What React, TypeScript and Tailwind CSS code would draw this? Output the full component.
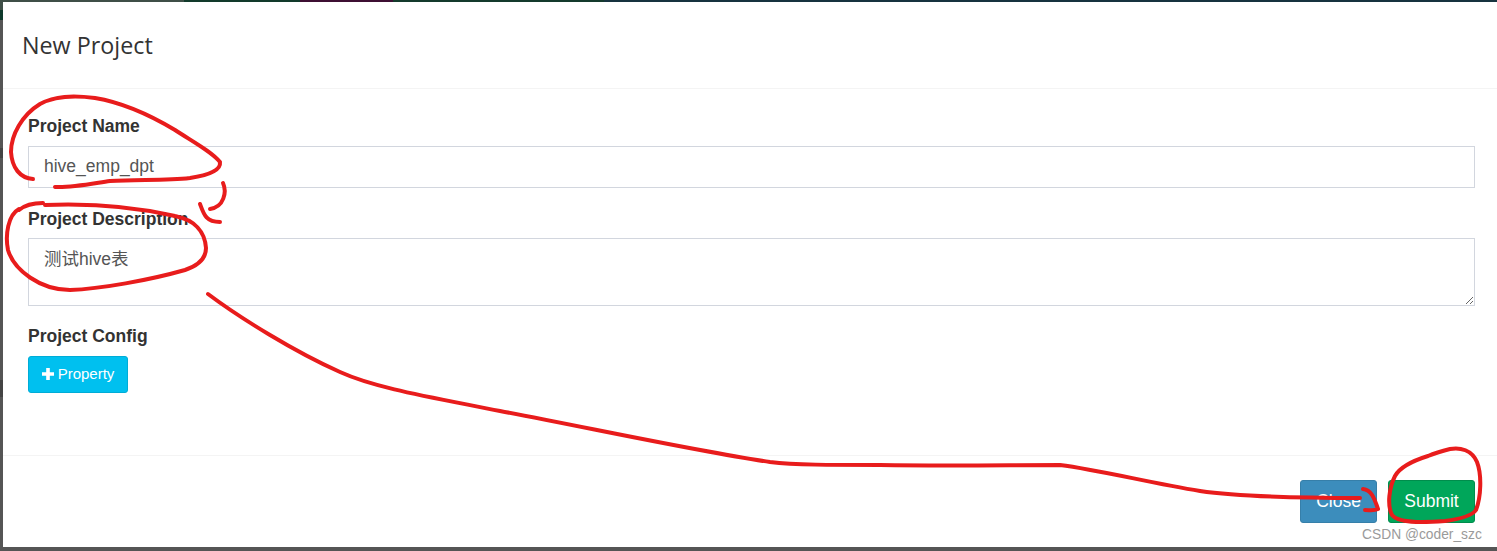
const sans = "font-['Liberation_Sans','Noto_Sans_CJK_SC',sans-serif]";

const topStrip = [
  { w: "w-[184px]", c: "bg-[#3f4f47]" },
  { w: "w-[116px]", c: "bg-[#123a2b]" },
  { w: "w-[93px]", c: "bg-[#3d0f33]" },
  { w: "w-[211px]", c: "bg-[#143a2c]" },
  { w: "flex-1", c: "bg-[#17333f]" },
];

const labelClass = "h-[20px] text-[17.5px] leading-[20px] font-bold text-[#333333]";

// hand drawn red marks on top of the screenshot
const Scribbles = () => (
  <svg
    className="pointer-events-none absolute top-0 left-0"
    width="1497"
    height="551"
    viewBox="0 0 1497 551"
    fill="none"
    stroke="#e81c1c"
    strokeWidth="4"
    strokeLinecap="round"
    strokeLinejoin="round"
  >
    <path d="M33 179C20 178 12 168 11 152C11 135 22 115 40 104C55 96 72 95 95 98C125 103 150 115 175 130C195 143 212 152 220 162C221 170 210 175 190 178C165 181 135 179 110 181C90 184 70 188 55 187" />
    <path d="M223 183C227 192 224 207 210 209" />
    <path d="M200 204C204 215 206 222 220 222" />
    <path d="M19 210C25 205 35 203 43 203M19 209C8 215 5 235 8 250C14 270 40 290 70 290C100 289 150 280 185 270C200 265 206 258 206 248C205 232 195 220 175 216C140 208 95 203 45 205" />
    <path d="M208 294C240 318 295 352 340 372C375 388 430 397 500 411C590 428 700 452 770 462C795 465 830 465 880 465C950 466 1010 465 1060 465C1100 470 1150 483 1200 491C1240 497 1300 498 1360 498" />
    <path d="M1363 489C1371 490 1374 497 1378 509C1374 511 1370 510 1365 510" />
    <path d="M1428 456C1412 461 1400 467 1395 476C1389 488 1387 505 1392 515C1398 523 1420 523 1445 521C1460 519 1472 516 1476 510C1481 497 1482 475 1477 462C1472 450 1460 447 1450 449C1442 451 1435 453 1428 456" />
  </svg>
);

export default function App() {
  return (
    <div className={`relative flex h-[551px] w-[1497px] flex-col overflow-hidden bg-[#555555] ${sans}`}>
      <div className="flex h-[2px] shrink-0">
        {topStrip.map((s, i) => (
          <div key={i} className={`${s.w} ${s.c}`} />
        ))}
      </div>

      <div className="flex h-[545px] shrink-0">
        <div className="flex w-[3px] shrink-0 flex-col">
          <div className="h-[8px] bg-[#3f4f47]" />
          <div className="h-[10px] bg-[#0f3a2c]" />
          <div className="mt-[128px] h-[10px] bg-[#444444]" />
          <div className="mt-[222px] h-[17px] bg-[#444444]" />
        </div>
        <div className="flex flex-1 flex-col bg-white">
          <div className="flex h-[87px] shrink-0 items-center border-b border-[#f4f4f4] pt-[2px] pl-[19px]">
            <h4 className="font-['Open_Sans',sans-serif] text-[23.3px] leading-none text-[#333333]">New Project</h4>
          </div>

          <div className="flex flex-1 flex-col pt-[27px] pr-[22px] pl-[25px]">
            <label className={`mb-[10px] ${labelClass}`}>Project Name</label>
            <input
              readOnly
              defaultValue="hive_emp_dpt"
              className="h-[42px] border border-[#d2d6de] px-[15px] pb-[2px] text-[17.5px] text-[#555555] outline-none"
            />
            <label className={`mt-[21px] mb-[9px] ${labelClass}`}>Project Description</label>
            <textarea
              readOnly
              defaultValue="测试hive表"
              className="h-[68px] border border-[#d2d6de] px-[15px] py-[8px] text-[17.5px] leading-[24px] text-[#555555] outline-none"
            />
            <label className={`mt-[20px] mb-[10px] ${labelClass}`}>Project Config</label>
            <button
              type="button"
              className="flex h-[37px] w-[100px] items-center justify-center gap-[4px] rounded-[3px] border border-[#00acd6] bg-[#00c0ef] text-[15px] text-white"
            >
              <svg className="mb-[1px]" width="12" height="12" viewBox="0 0 12 12" fill="white">
                <path d="M4.2 0h3.6v4.2H12v3.6H7.8V12H4.2V7.8H0V4.2h4.2z" />
              </svg>
              Property
            </button>
          </div>

          <div className="flex h-[92px] shrink-0 items-start justify-end gap-[11px] border-t border-[#f4f4f4] pt-[24px] pr-[22px]">
            <button type="button" className="h-[43px] w-[77px] rounded-[3px] border border-[#367fa9] bg-[#3c8dbc] text-[17.5px] text-white">
              Close
            </button>
            <button type="button" className="h-[43px] w-[87px] rounded-[3px] border border-[#008d4c] bg-[#00a65a] text-[17.5px] text-white">
              Submit
            </button>
          </div>
        </div>
      </div>

      <div className="flex-1" />

      <Scribbles />
      <span className="absolute top-[526px] left-[1362px] text-[13.8px] leading-[18px] text-[#9a9a9a]">CSDN @coder_szc</span>
    </div>
  );
}
